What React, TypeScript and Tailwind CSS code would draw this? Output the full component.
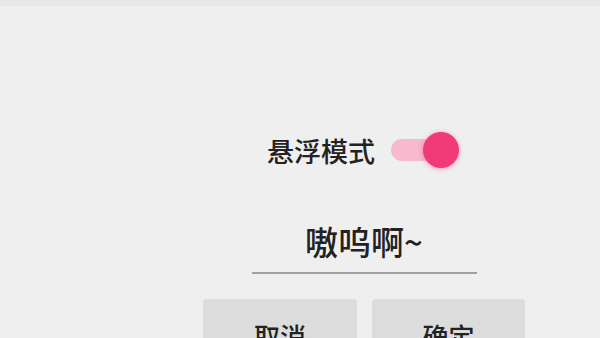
import React, { useState } from 'react';

export default function App() {
  const [floating, setFloating] = useState(true);
  const [name, setName] = useState('嗷呜啊~');

  return (
    <div
      className="w-[600px] h-[338px] overflow-hidden bg-[#efefef] flex flex-col"
      style={{ fontFamily: '"Noto Sans CJK SC", "Noto Sans", sans-serif' }}
    >
      <div className="h-[6px] shrink-0 bg-[#e8e8e8]" />
      <div className="ml-[203px] w-[322px] flex flex-col pt-[124px]">
        <div className="flex items-center justify-center gap-[16px] h-[40px]">
          <span className="text-[27px] leading-none font-medium text-[#222]">悬浮模式</span>
          <button
            onClick={() => setFloating(f => !f)}
            className="relative w-[70px] h-[40px]"
          >
            <span className={`absolute left-0 top-[9px] w-[56px] h-[22px] rounded-full ${floating ? 'bg-[#f6b9cd]' : 'bg-[#c8c8c8]'}`} />
            <span className={`absolute top-[2px] w-[36px] h-[36px] rounded-full shadow-[0_1px_5px_rgba(240,60,120,0.45)] ${floating ? 'right-[2px] bg-[#f13a78]' : 'left-0 bg-[#fafafa]'}`} />
          </button>
        </div>
        <div className="flex justify-center mt-[48px]">
          <input
            value={name}
            onChange={e => setName(e.target.value)}
            className="w-[225px] h-[56px] pb-[8px] text-center text-[33px] font-medium text-[#222] bg-transparent border-b-2 border-[#a0a0a0] outline-none"
          />
        </div>
        <div className="flex gap-[15px] mt-[25px]">
          <button className="w-[154px] h-[60px] rounded-[4px] bg-[#dcdcdc] text-[26px] font-medium text-[#222] pt-[12px]">取消</button>
          <button className="w-[153px] h-[60px] rounded-[4px] bg-[#dcdcdc] text-[26px] font-medium text-[#222] pt-[12px]">确定</button>
        </div>
      </div>
    </div>
  );
}
